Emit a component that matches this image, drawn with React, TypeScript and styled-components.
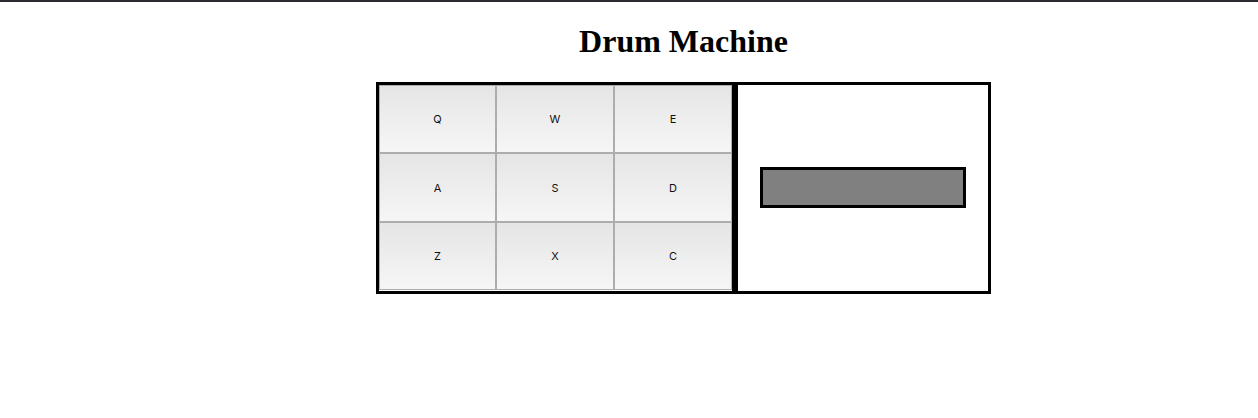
import React, { useState } from "react";
import styled, { createGlobalStyle } from "styled-components";

const GlobalStyle = createGlobalStyle`
  *, *::before, *::after { box-sizing: border-box; }
  body {
    margin: 0;
    background: #fff;
    color: #000;
    font-family: "Liberation Serif", "Times New Roman", serif;
  }
`;

const Page = styled.div`
  border-top: 2px solid #2e2b30;
  padding: 20px 0 20px 109px;
`;

const Title = styled.h1`
  margin: 0 0 22px;
  font-size: 32px;
  line-height: 38px;
  font-weight: bold;
  text-align: center;
`;

const Machine = styled.main`
  display: grid;
  grid-template-columns: 359fr 256fr;
  max-width: 615px;
  margin: 0 auto;
`;

const Panel = styled.section`
  border: 3px solid #000;
`;

const PadGrid = styled(Panel)`
  display: grid;
  grid-template-columns: 117fr 118fr 118fr;
  grid-template-rows: 68fr 69fr 68fr;
  height: 212px;
  padding-bottom: 1px;
`;

const Controls = styled(Panel)`
  display: flex;
  align-items: center;
  justify-content: center;
  padding: 0 22px 2px;
`;

const Pad = styled.button`
  margin: 0;
  padding: 0;
  border: 1px solid #adadad;
  border-radius: 0;
  background: linear-gradient(#e5e5e5, #f6f6f6);
  color: #111;
  font-family: Inter, "Liberation Sans", sans-serif;
  font-size: 11px;
  line-height: 14px;
  text-align: center;

  &:active {
    background: #ddd;
  }
`;

const Display = styled.output`
  display: block;
  width: 100%;
  height: 41px;
  border: 3px solid #000;
  background: #808080;
  text-align: center;
  line-height: 35px;
`;

const KEYS = ["Q", "W", "E", "A", "S", "D", "Z", "X", "C"];

export default function App() {
  const [played, setPlayed] = useState("");

  return (
    <Page>
      <GlobalStyle />
      <Title>Drum Machine</Title>
      <Machine>
        <PadGrid aria-label="Drum pads">
          {KEYS.map((key) => (
            <Pad key={key} type="button" onClick={() => setPlayed(key)}>
              {key}
            </Pad>
          ))}
        </PadGrid>
        <Controls aria-label="Controls">
          <Display aria-label="Last pad played">{played}</Display>
        </Controls>
      </Machine>
    </Page>
  );
}
